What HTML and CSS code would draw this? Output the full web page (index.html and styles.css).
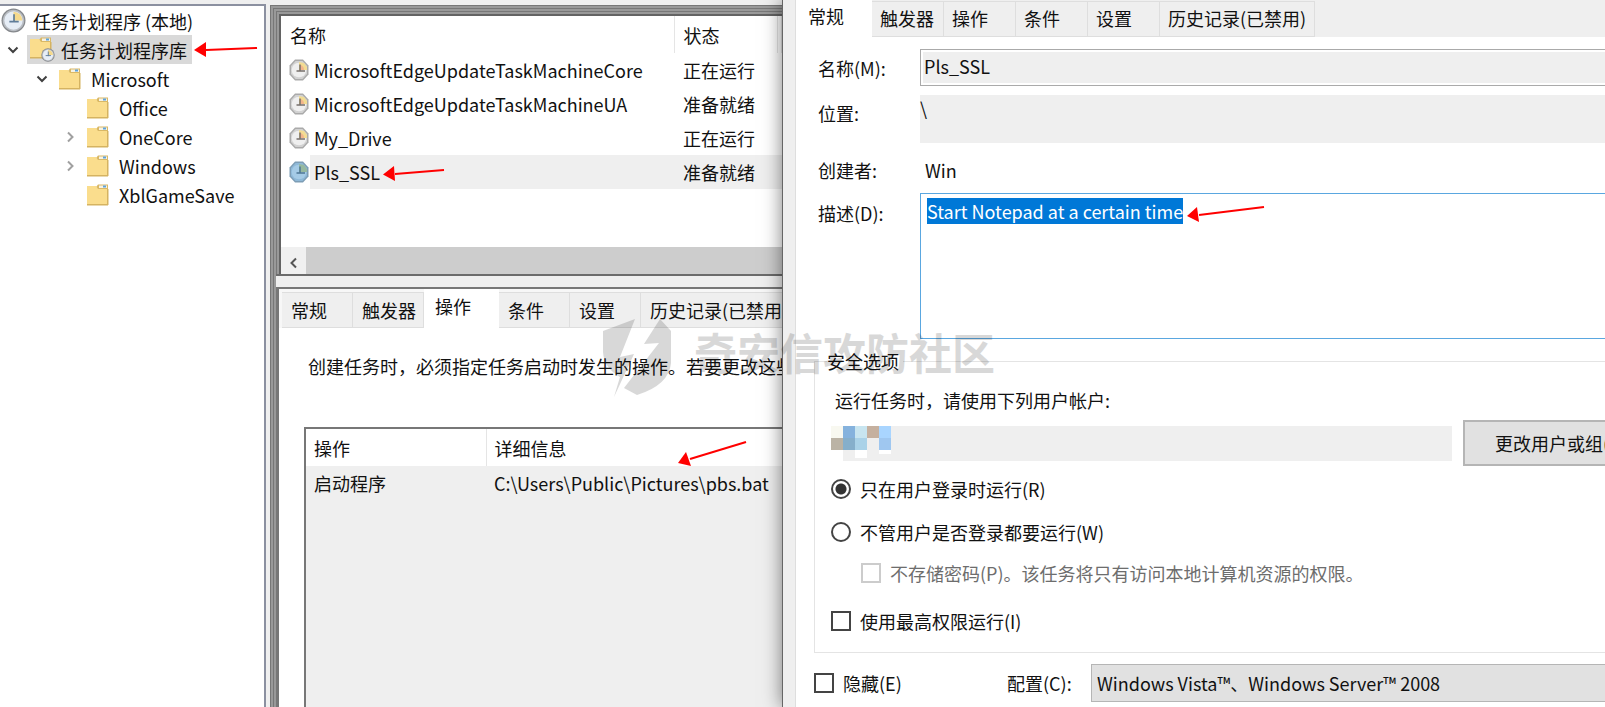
FILE: index.html
```html
<!DOCTYPE html>
<html lang="zh-CN">
<head>
  <meta charset="UTF-8">
  <title>任务计划程序</title>
  <meta name="viewport" content="width=device-width, initial-scale=1.0">
  <link rel="stylesheet" href="styles.css">
</head>
<body>

  <!-- Shared icons -->
  <svg class="sprite" width="0" height="0">
    <symbol id="clock" viewBox="0 0 24 24">
      <circle cx="12" cy="12" r="11.5" fill="#85888c"/>
      <circle cx="12" cy="12" r="10.3" fill="#b9bdc3"/>
      <circle cx="12" cy="12" r="8.8" fill="#e6edf6"/>
      <path d="M12 12V3.500A8.500 8.500 0 0 1 20.500 12z" fill="#f5d98c"/>
      <path d="M12.500 6v8M8 13h9" fill="none" stroke="#5f7c99" stroke-width="1.6"/>
    </symbol>
    <symbol id="task" viewBox="0 0 20 22">
      <path d="M6 .5h8l5.500 6v9l-5.500 6H6l-5.500-6v-9z" fill="#aaa"/>
      <path d="M6.500 2h7l4.500 5v8l-4.500 5h-7L2 15V7z" fill="#d2d2d2"/>
      <circle cx="10" cy="11" r="7.3" fill="#efefef"/>
      <path d="M10 11V3l5 1 3 4v3z" fill="#f2dc93"/>
      <path d="M11 11V6a5 5 0 0 1 4 5z" fill="#f3b58b"/>
      <path d="M11 5.500V12M7.500 12H16" fill="none" stroke="#77706c" stroke-width="1.5"/>
    </symbol>
    <symbol id="task-blue" viewBox="0 0 20 22">
      <path d="M6 .5h8l5.500 6v9l-5.500 6H6l-5.500-6v-9z" fill="#7d9db5"/>
      <path d="M6.500 2h7l4.500 5v8l-4.500 5h-7L2 15V7z" fill="#8fb9d8"/>
      <circle cx="10" cy="11" r="7.3" fill="#a5cbe6"/>
      <path d="M10 11V3l5 1 3 4v3z" fill="#96b9a0"/>
      <path d="M11 5.500V12M7.500 12H16" fill="none" stroke="#4d7795" stroke-width="1.5"/>
    </symbol>
    <symbol id="folder" viewBox="0 0 22 22">
      <path d="M9 3l2-2.500h10V6H9z" fill="#d9b866"/>
      <path d="M12 1.500h8V4h-8z" fill="#f7f3e4"/>
      <path d="M16 1.500h3v2h-3z" fill="#5fa3dc"/>
      <path d="M0 2h9l2 3h10v16H0z" fill="#fadd8d"/>
      <path d="M0 20h21v1.500H0zM20 5h1.500v16H20z" fill="#d5b361"/>
    </symbol>
  </svg>

  <div class="desktop">

    <!-- Tree -->
    <nav class="tree">
      <div class="node"><svg class="clock"><use href="#clock"/></svg><span>任务计划程序 (本地)</span></div>
      <div class="node level1">
        <svg class="chevron open" viewBox="0 0 12 12"><path d="M1.500 3.500l4.500 4.500 4.500-4.500"/></svg>
        <span class="picked">
          <svg class="library" viewBox="0 0 25 25"><use href="#folder" width="22" height="22"/><use href="#clock" x="11" y="11" width="14" height="14"/></svg>
          任务计划程序库
        </span>
      </div>
      <div class="node level2"><svg class="chevron open" viewBox="0 0 12 12"><path d="M1.500 3.500l4.500 4.500 4.500-4.500"/></svg><svg class="folder"><use href="#folder"/></svg><span>Microsoft</span></div>
      <div class="node level3"><span class="chevron"></span><svg class="folder"><use href="#folder"/></svg><span>Office</span></div>
      <div class="node level3"><svg class="chevron" viewBox="0 0 12 12"><path d="M4 1.500l4.500 4.500-4.500 4.500"/></svg><svg class="folder"><use href="#folder"/></svg><span>OneCore</span></div>
      <div class="node level3"><svg class="chevron" viewBox="0 0 12 12"><path d="M4 1.500l4.500 4.500-4.500 4.500"/></svg><svg class="folder"><use href="#folder"/></svg><span>Windows</span></div>
      <div class="node level3"><span class="chevron"></span><svg class="folder"><use href="#folder"/></svg><span>XblGameSave</span></div>
    </nav>

    <!-- Task list and details -->
    <main class="center">
      <section class="tasks">
        <table class="task-table">
          <thead>
            <tr><th class="name-col">名称</th><th class="state-col">状态</th><th></th></tr>
          </thead>
          <tbody>
            <tr><td><div class="task"><svg><use href="#task"/></svg><span>MicrosoftEdgeUpdateTaskMachineCore</span></div></td><td>正在运行</td><td></td></tr>
            <tr><td><div class="task"><svg><use href="#task"/></svg><span>MicrosoftEdgeUpdateTaskMachineUA</span></div></td><td>准备就绪</td><td></td></tr>
            <tr><td><div class="task"><svg><use href="#task"/></svg><span>My_Drive</span></div></td><td>正在运行</td><td></td></tr>
            <tr class="selected"><td><div class="task"><svg><use href="#task-blue"/></svg><span>Pls_SSL</span></div></td><td>准备就绪</td><td></td></tr>
          </tbody>
        </table>
        <div class="scrollbar">
          <button class="scroll-left" aria-label="向左滚动"><svg viewBox="0 0 12 12"><path d="M8 1.500L3.500 6 8 10.500"/></svg></button>
        </div>
      </section>

      <section class="details">
        <div class="tabs">
          <button class="tab">常规</button>
          <button class="tab">触发器</button>
          <button class="tab active">操作</button>
          <button class="tab">条件</button>
          <button class="tab">设置</button>
          <button class="tab last">历史记录(已禁用)</button>
        </div>
        <div class="actions">
          <p>创建任务时，必须指定任务启动时发生的操作。若要更改这些</p>
          <div class="action-box">
            <table class="action-table">
              <thead>
                <tr><th class="action-col">操作</th><th>详细信息</th></tr>
              </thead>
              <tbody>
                <tr><td>启动程序</td><td>C:\Users\Public\Pictures\pbs.bat</td></tr>
              </tbody>
            </table>
          </div>
        </div>
      </section>
    </main>

    <!-- Properties window -->
    <div class="dialog">
      <form class="sheet">
        <div class="tabs">
          <button type="button" class="tab active">常规</button>
          <button type="button" class="tab">触发器</button>
          <button type="button" class="tab">操作</button>
          <button type="button" class="tab">条件</button>
          <button type="button" class="tab">设置</button>
          <button type="button" class="tab last">历史记录(已禁用)</button>
        </div>

        <div class="page">
          <div class="field">
            <label for="name">名称(M):</label>
            <input type="text" id="name" class="name" value="Pls_SSL" readonly>
          </div>
          <div class="field top">
            <span class="caption">位置:</span>
            <div class="location">\</div>
          </div>
          <div class="field">
            <span class="caption">创建者:</span>
            <span class="author">Win</span>
          </div>
          <div class="field top">
            <label for="description">描述(D):</label>
            <textarea id="description" spellcheck="false">Start Notepad at a certain time</textarea>
          </div>

          <fieldset>
            <legend>安全选项</legend>
            <p>运行任务时，请使用下列用户帐户:</p>
            <div class="account">
              <div class="user">
                <svg viewBox="0 0 60 35">
                  <path d="M0 0h12v12H0z" fill="#f8f8f0"/>
                  <path d="M12 0h12v12H12z" fill="#85b2dd"/>
                  <path d="M24 0h12v12H24z" fill="#c8e5f0"/>
                  <path d="M36 0h12v12H36z" fill="#c5b09f"/>
                  <path d="M48 0h12v12H48z" fill="#a9d5ff"/>
                  <path d="M0 12h12v12H0z" fill="#bbb3a5"/>
                  <path d="M12 12h12v12H12z" fill="#86afcb"/>
                  <path d="M24 12h12v12H24z" fill="#aad2e8"/>
                  <path d="M48 12h12v12H48z" fill="#9fc7f0"/>
                  <path d="M0 24h12v11H0zM24 24h12v8H24zM48 24h12v4H48z" fill="#fff"/>
                </svg>
              </div>
              <button type="button" class="change">更改用户或组(U)...</button>
            </div>
            <label class="choice"><input type="radio" name="logon" checked>只在用户登录时运行(R)</label>
            <label class="choice"><input type="radio" name="logon">不管用户是否登录都要运行(W)</label>
            <label class="choice sub"><input type="checkbox" disabled>不存储密码(P)。该任务将只有访问本地计算机资源的权限。</label>
            <label class="choice highest"><input type="checkbox">使用最高权限运行(I)</label>
          </fieldset>

          <div class="bottom">
            <label class="hide"><input type="checkbox">隐藏(E)</label>
            <label for="config" class="config-label">配置(C):</label>
            <select id="config">
              <option>Windows Vista™、Windows Server™ 2008</option>
            </select>
          </div>
        </div>
      </form>
    </div>
  </div>

  <!-- Watermark -->
  <div class="watermark">
    <svg viewBox="0 0 70 80">
      <path d="M1 13L33 1 18 39l14-3L12 79l6-20Q2 50 1 34z"/>
      <path d="M58 1l11 12v32q-2 22-34 32L22 70l35-45-15 1z"/>
    </svg>
    <span>奇安信攻防社区</span>
  </div>

  <!-- Arrows -->
  <svg class="arrow library-arrow" viewBox="0 0 64 16"><path d="M12 8l51-2"/><path class="head" d="M0 8l12-8v15z"/></svg>
  <svg class="arrow task-arrow" viewBox="0 0 64 16"><path d="M12 8l49-4"/><path class="head" d="M0 8.500L11 0l1 15z"/></svg>
  <svg class="arrow action-arrow" viewBox="0 0 70 26"><path d="M12 18L68 1"/><path class="head" d="M0 22l8-11 5 14z"/></svg>
  <svg class="arrow text-arrow" viewBox="0 0 80 18"><path d="M12 9l65-8"/><path class="head" d="M0 10l10-9 2 15z"/></svg>

  <script>
    const description = document.getElementById("description");
    description.focus();
    description.select();
  </script>

</body>
</html>
```
FILE: styles.css
```css
* {
  box-sizing: border-box;
}

body {
  margin: 0;
  background: #efefef;
  color: #111;
  overflow: hidden;
}

body, button, input, textarea, select {
  font-family: "Noto Sans CJK SC", sans-serif;
  font-size: 18px;
  line-height: 26px;
}

button, input, textarea, select {
  color: inherit;
  border-radius: 0;
  margin: 0;
}

p {
  margin: 0;
  white-space: nowrap;
}

.sprite {
  position: absolute;
}

.desktop {
  display: flex;
  height: 100vh;
}

/* tree */
.tree {
  flex: none;
  width: 266px;
  margin-top: 4px;
  background: #fff;
  border-top: 2px solid #8b90a0;
  border-right: 2px solid #8b90a0;
}

.node {
  display: flex;
  align-items: center;
  height: 29px;
  padding-left: 1px;
}

.clock {
  width: 25px;
  height: 25px;
  margin-right: 7px;
}

.level1 {
  padding-left: 7px;
}

.level2 {
  padding-left: 36px;
}

.level3 {
  padding-left: 64px;
}

.chevron {
  flex: none;
  width: 12px;
  height: 12px;
  margin-right: 11px;
  fill: none;
  stroke: #a0a0a0;
  stroke-width: 2;
}

.chevron.open {
  stroke: #404040;
}

.level1 .chevron {
  margin-right: 8px;
}

.folder {
  width: 22px;
  height: 22px;
  margin-right: 10px;
}

.picked {
  display: flex;
  align-items: center;
  height: 29px;
  padding: 0 5px 0 3px;
  background: #d9d9d9;
}

.library {
  width: 25px;
  height: 25px;
  margin-right: 6px;
}

/* middle */
.center {
  flex: none;
  width: 512px;
  margin: 5px 0 0 4px;
  padding: 6px 0 0 6px;
  display: flex;
  flex-direction: column;
  overflow: hidden;
  box-shadow: inset 1px 1px #777, inset 3px 3px #999, inset 4px 4px #777, inset 6px 6px #999;
}

.tasks {
  display: flex;
  flex-direction: column;
  height: 265px;
  padding: 5px 0 0 5px;
  border-bottom: 2px solid #6b6b6b;
  background: #fff;
  box-shadow: inset 1px 1px #777, inset 3px 3px #999, inset 5px 5px #636363;
}

table {
  border-collapse: collapse;
  table-layout: fixed;
  width: 100%;
}

th, td {
  padding: 0 0 0 9px;
  font-weight: normal;
  text-align: left;
  white-space: nowrap;
}

.task-table th {
  height: 37px;
  border-right: 1px solid #e5e5e5;
}

.task-table td, .task {
  height: 34px;
}

.name-col {
  width: 393px;
}

.state-col {
  width: 103px;
}

.task-table td:first-child {
  padding-left: 8px;
}

.task {
  display: flex;
  align-items: center;
}

.task svg {
  width: 20px;
  height: 22px;
  margin-right: 1px;
}

.task span {
  flex: 1;
  padding-left: 4px;
  line-height: 34px;
}

.selected td:not(:first-child), .selected .task span {
  background: #efefef;
}

.scrollbar {
  display: flex;
  height: 27px;
  margin-top: auto;
  background: #cdcdcd;
}

.scroll-left {
  width: 25px;
  padding: 0;
  border: none;
  background: #f0f0f0;
}

.scroll-left svg {
  width: 12px;
  height: 12px;
  fill: none;
  stroke: #555;
  stroke-width: 2;
}

.details {
  flex: 1;
  display: flex;
  flex-direction: column;
  margin-top: 11px;
  border: solid #777;
  border-width: 2px 0 0 3px;
}

.tabs {
  display: flex;
  align-items: flex-end;
  height: 39px;
}

.tab {
  flex: none;
  height: 36px;
  padding: 0 0 0 9px;
  background: #efefef;
  border: solid #dedede;
  border-width: 1px 1px 1px 0;
  text-align: left;
  white-space: nowrap;
}

.tab.active {
  height: 39px;
  padding-bottom: 6px;
  background: #fff;
  border: none;
}

.details .tabs {
  padding-left: 3px;
  background: #f7f7f7;
}

.details .tab {
  width: 71px;
}

.details .tab.active {
  width: 75px;
  padding-left: 11px;
}

.details .tab.last {
  width: 170px;
}

.actions {
  flex: 1;
  display: flex;
  flex-direction: column;
  padding: 25px 0 0 25px;
  background: #fff;
}

.actions p {
  padding-left: 4px;
}

.action-box {
  flex: 1;
  margin-top: 48px;
  background: #efefef;
  border: solid #777;
  border-width: 2px 0 0 2px;
}

.action-table th {
  height: 37px;
  background: #fff;
}

.action-table th, .action-table td {
  padding-left: 8px;
}

.action-table td {
  height: 33px;
}

.action-col {
  width: 180px;
  border-right: 1px solid #e5e5e5;
}

/* properties window */
.dialog {
  position: relative;
  flex: 1;
  min-width: 0;
  padding-left: 12px;
  background: #efefef;
  border-left: 1px solid #666;
  box-shadow: 0 0 18px rgba(0, 0, 0, 0.5);
}

.sheet {
  width: calc(100% + 103px);
  height: 100%;
  border-left: 1px solid #dedede;
  background: #fff;
}

.sheet .tabs {
  height: 37px;
  background: #efefef;
}

.sheet .tab {
  width: 72px;
  padding-left: 8px;
  padding-bottom: 2px;
}

.sheet .tab.active {
  width: 76px;
  height: 37px;
  padding-left: 12px;
  padding-bottom: 6px;
}

.sheet .tab.last {
  width: 155px;
}

.page {
  padding: 12px 16px 0 18px;
}

.field {
  display: flex;
  align-items: center;
  padding-left: 4px;
}

.field label, .caption {
  flex: none;
  width: 102px;
}

.name {
  flex: 1;
  height: 37px;
  padding: 0 0 4px 3px;
  background: #efefef;
  border: 1px solid #aaa;
  box-shadow: inset 0 0 0 2px #fff;
}

.location {
  flex: 1;
  height: 48px;
  margin: 9px 0;
  background: #efefef;
}

.top .caption {
  padding-top: 14px;
}

.field .author {
  padding-left: 5px;
}

.field:has(.author) {
  padding-top: 5px;
  padding-bottom: 10px;
}

.field.top {
  align-items: flex-start;
}

.field.top label {
  padding-top: 7px;
}

#description {
  flex: 1;
  height: 146px;
  padding: 4px 6px;
  border: 1px solid #5aa7e0;
  outline: none;
  resize: none;
}

#description::selection {
  background: #0078d7;
  color: #fff;
}

fieldset {
  margin: 9px 0 0;
  padding: 13px 16px 18px;
  border: 1px solid #e4e4e4;
}

legend {
  padding: 0 4px 0 0;
  margin-left: -4px;
}

fieldset p {
  padding-left: 4px;
}

.account {
  display: flex;
  align-items: center;
  gap: 11px;
  margin-top: 7px;
}

.user {
  flex: 1;
  height: 35px;
  background: #efefef;
}

.user svg {
  display: block;
  width: 60px;
  height: 35px;
}

.change {
  width: 212px;
  height: 46px;
  padding: 0;
  background: #e1e1e1;
  border: 2px solid #b5b5b5;
}

.choice, .hide {
  display: flex;
  align-items: center;
  gap: 9px;
}

.choice {
  margin-top: 17px;
}

.account + .choice {
  margin-top: 10px;
}

.choice input, .hide input {
  appearance: none;
  flex: none;
  width: 20px;
  height: 20px;
  border: 2px solid #444;
  background: #fff;
}

.choice input[type="radio"] {
  border-radius: 50%;
}

.choice input[type="radio"]:checked {
  background: radial-gradient(#333 5px, #fff 6px);
}

.choice input:disabled {
  border-color: #ccc;
}

.choice.sub {
  margin-top: 15px;
  padding-left: 30px;
  color: #6d6d6d;
}

.choice.highest {
  margin-top: 22px;
}

.bottom {
  display: flex;
  align-items: center;
  margin-top: 11px;
}

.hide {
  width: 193px;
}

.config-label {
  width: 84px;
}

#config {
  appearance: none;
  flex: 1;
  height: 38px;
  padding: 0 5px;
  background: #e1e1e1;
  border: 1px solid #b5b5b5;
}

/* over everything */
.watermark {
  position: absolute;
  left: 602px;
  top: 318px;
  display: flex;
  align-items: center;
  gap: 22px;
  opacity: 0.15;
  color: #000;
  font-size: 43px;
  font-weight: bold;
  pointer-events: none;
}

.watermark span {
  padding-bottom: 14px;
}

.watermark svg {
  width: 70px;
  height: 80px;
}

.arrow {
  position: absolute;
  fill: none;
  stroke: #f00;
  stroke-width: 2;
}

.arrow .head {
  fill: #f00;
  stroke: none;
}

.library-arrow {
  left: 194px;
  top: 42px;
  width: 64px;
  height: 16px;
}

.task-arrow {
  left: 383px;
  top: 166px;
  width: 64px;
  height: 16px;
}

.action-arrow {
  left: 678px;
  top: 441px;
  width: 70px;
  height: 26px;
}

.text-arrow {
  left: 1187px;
  top: 206px;
  width: 80px;
  height: 18px;
}
```
